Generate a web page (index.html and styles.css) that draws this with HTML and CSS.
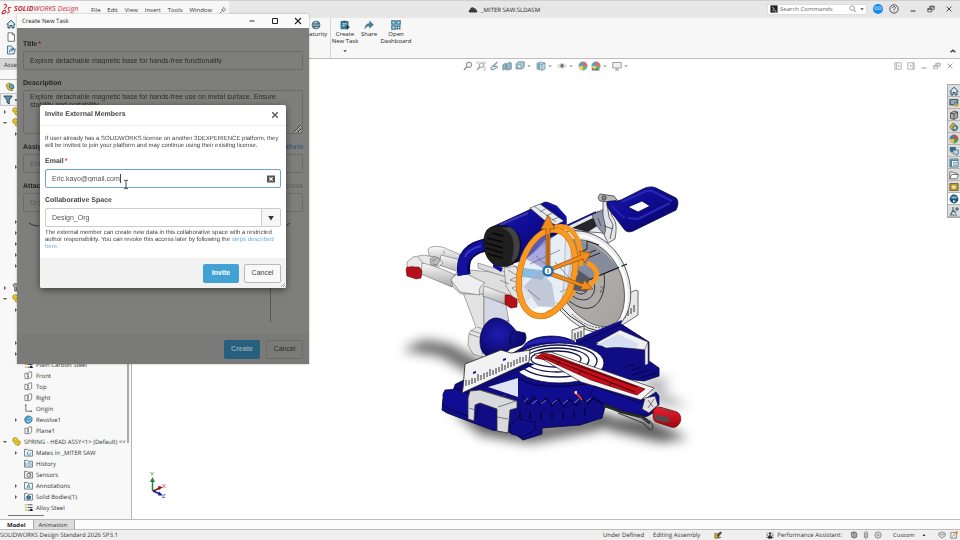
FILE: index.html
```html
<!DOCTYPE html>
<html lang="en">
<head>
<meta charset="utf-8">
<title>SOLIDWORKS Design - _MITER SAW.SLDASM</title>
<link rel="stylesheet" href="styles.css">
</head>
<body>
<svg class="defs" aria-hidden="true">
  <symbol id="i-plane" viewBox="0 0 10 10"><path d="M1 2.500h3v6H1zM4 2.500L5.500 1h3v6L6 8.500H4" fill="none" stroke="#666" stroke-width=".8"/><path d="M5 3v4" stroke="#444" stroke-width=".8" stroke-dasharray="1.500 1"/></symbol>
  <symbol id="i-origin" viewBox="0 0 10 10"><path d="M1 1h2M2 1v7h7M8 7v2" fill="none" stroke="#555" stroke-width=".9"/></symbol>
  <symbol id="i-revolve" viewBox="0 0 10 10"><path d="M1 6c-1-3 2-5 4-5l3 1c2 2 1 6-2 7-3 1-5-1-5-3z" fill="#4a9cc4" stroke="#1f6080" stroke-width=".7"/><path d="M4 6c0-2 2-3 4-3M3 7c2 1 4 0 5-2" fill="none" stroke="#cdeaf6" stroke-width=".9"/></symbol>
  <symbol id="i-part" viewBox="0 0 10 10"><path d="M1 2l2.500-1.500L6 2l.5 2 2.500.8v3L6.500 9.500 3.500 8 3 6 1 5z" fill="#f1cf2b" stroke="#92780e" stroke-width=".8"/><path d="M3 4l3 1.500M6.500 6v2" stroke="#92780e" stroke-width=".6"/></symbol>
  <symbol id="i-folder" viewBox="0 0 10 10"><path d="M.6 1.500h3l1 1h4.800v6.500H.6z" fill="#f2f5f6" stroke="#5f6b72" stroke-width=".9"/></symbol>
  <symbol id="i-mates" viewBox="0 0 10 10"><use href="#i-folder"/><path d="M4 4v3.500c2 1 3 0 3-1V5" fill="none" stroke="#3f8fb5" stroke-width="1"/></symbol>
  <symbol id="i-history" viewBox="0 0 10 10"><use href="#i-folder"/><circle cx="6" cy="6" r="2" fill="#fff" stroke="#2b8ab8" stroke-width=".8"/><path d="M6 5v1h1" fill="none" stroke="#333" stroke-width=".6"/><path d="M2 4v4" stroke="#46a060"/></symbol>
  <symbol id="i-sensors" viewBox="0 0 10 10"><use href="#i-folder"/><circle cx="5.500" cy="5.800" r="2.200" fill="#fff" stroke="#333" stroke-width=".8"/><path d="M5.500 6l1.500-1" stroke="#c22" stroke-width="1"/></symbol>
  <symbol id="i-annot" viewBox="0 0 10 10"><use href="#i-folder"/><path d="M3.200 8L5 3.500 6.800 8M4 6.500h2" fill="none" stroke="#2380a8" stroke-width=".9"/></symbol>
  <symbol id="i-solid" viewBox="0 0 10 10"><use href="#i-folder"/><path d="M3 4.800l2-1 2.200 1v2.400l-2.200 1-2-1z" fill="#2b86ad" stroke="#124" stroke-width=".6"/></symbol>
  <symbol id="i-steel" viewBox="0 0 10 10"><path d="M1 2h2M1 5h2M1 8h2" stroke="#d3a82a" stroke-width="1.300"/><path d="M4 2h5.500M4 5h5.500M4 8h2" stroke="#4a5a62" stroke-width="1.100"/><path d="M6 9l1-2.500h2L10 9z" fill="#222"/></symbol>
  <symbol id="i-caret" viewBox="0 0 6 6"><path d="M1.300 2.200h3.400L3 4.200z" fill="#444"/></symbol>
  <symbol id="i-min" viewBox="0 0 10 10"><path d="M2 7.500h6" stroke="currentColor" stroke-width="1.300"/></symbol>
  <symbol id="i-restore" viewBox="0 0 10 10"><path d="M1 4.500h5v4H1zM3.500 4V1.500h5.500v4H6.500M3.500 2.500H9M1 5.500h5" fill="none" stroke="currentColor" stroke-width=".9"/></symbol>
  <symbol id="i-close" viewBox="0 0 10 10"><path d="M2 2l6 6M8 2L2 8" stroke="currentColor" stroke-width="1.100"/></symbol>
  <symbol id="i-max" viewBox="0 0 10 10"><path d="M2.500 2.500h5v5h-5z" fill="none" stroke="currentColor" stroke-width="1"/></symbol>
  <symbol id="i-home" viewBox="0 0 10 10"><path d="M.8 5.500L5 1.200l4.200 4.300M2 5v4h2V6.500h2V9h2V5" fill="#d8ebf4" stroke="#244d66" stroke-width="1"/></symbol>
  <symbol id="i-ball" viewBox="0 0 10 10"><circle cx="5" cy="5" r="4.300" fill="#e8edf2" stroke="#777" stroke-width=".4"/><path d="M5 5V.7A4.300 4.300 0 0 0 .7 5z" fill="#38a"/><path d="M5 5V.7A4.300 4.300 0 0 1 9.300 5z" fill="#d8453c"/><path d="M5 5h4.300A4.300 4.300 0 0 1 5 9.300z" fill="#48a248"/><path d="M5 5v4.300A4.300 4.300 0 0 1 .7 5z" fill="#e5bd4e"/></symbol>
  <symbol id="i-cube" viewBox="0 0 10 10"><path d="M1 2.500L4 1l5 1v6L6 9.200 1 8z" fill="#b6d9e6" stroke="#456878" stroke-width=".7"/><path d="M1 2.500L6 3.400V9.200M6 3.400L9 2" fill="none" stroke="#456878" stroke-width=".7"/><path d="M1.400 3L4 3.500V8.300L1.400 7.700z" fill="#4d93b0"/></symbol>
</svg>

<div class="app">
  <header class="titlebar">
    <div class="brand">
      <svg class="brand-mark" viewBox="0 0 12 12"><path d="M3 .8c2-.6 4.300.3 2.500 2.400L3.600 5M1 10.500c3 .2 5-1.400 4.200-3C4.700 6.400 3 7 2 8L.8 10.600M11 4.200C9 3.300 7 4.200 8.200 6c1 1.500 2 3-1.700 4" fill="none" stroke="#c92b3b" stroke-width="1.200"/></svg>
      <span class="brand-name"><b>SOLID</b>WORKS <span class="brand-sub">Design</span></span>
    </div>
    <nav class="menu">
      <button>File</button><button>Edit</button><button>View</button><button>Insert</button><button>Tools</button><button>Window</button>
      <svg class="ic8" viewBox="0 0 10 10"><path d="M5 1l4 4M6 2L4 5l1.500 1.500L8.500 4.500M3 4l3.500 3.500M4.500 5.800L1 9" fill="none" stroke="#666" stroke-width=".9"/></svg>
    </nav>
    <div class="doc-title">
      <svg class="cloud" viewBox="0 0 10 7"><path d="M2 6.500C.2 6.400.2 4 2 3.800 2 1.400 5 .3 6.200 2.400c1.500-.3 2 .6 1.900 1.500C9.800 4 9.800 6.400 8.300 6.500z" fill="#3b3b3b"/></svg>
      <span>_MITER SAW.SLDASM</span>
    </div>
    <div class="title-tools">
      <div class="search">
        <svg class="ic8" viewBox="0 0 10 10"><path d="M.5.5h9v9h-9z" fill="#222"/><path d="M3 2.500L5.500 5 3 7.500M5.500 7.500H8" fill="none" stroke="#fff" stroke-width="1"/></svg>
        <input type="text" aria-label="Search Commands" placeholder="Search Commands">
        <svg class="ic8" viewBox="0 0 10 10"><circle cx="4" cy="4" r="2.900" fill="none" stroke="#888"/><path d="M6.200 6.200L9 9" stroke="#888" stroke-width="1.200"/></svg>
        <svg class="ic6"><use href="#i-caret"/></svg>
      </div>
      <span class="avatar">DD</span>
      <div class="window-buttons">
        <button aria-label="Help"><svg class="ic10" viewBox="0 0 10 10"><circle cx="5" cy="5" r="4.200" fill="none" stroke="#444" stroke-width=".9"/><path d="M3.600 4c0-2 3-1.800 2.800-.1C6.300 4.800 5 4.800 5 6M5 6.900v.9" fill="none" stroke="#444" stroke-width=".9"/></svg></button>
        <button aria-label="Minimize"><svg class="ic8"><use href="#i-min"/></svg></button>
        <button aria-label="Restore"><svg class="ic8"><use href="#i-restore"/></svg></button>
        <button aria-label="Close"><svg class="ic8"><use href="#i-close"/></svg></button>
      </div>
    </div>
  </header>

  <section class="ribbon">
    <div class="quick">
      <button aria-label="Home"><svg class="ic10"><use href="#i-home"/></svg></button>
      <button aria-label="New"><svg class="ic10" viewBox="0 0 10 10"><path d="M2 .8h4.500l2 2v6.500H2zM6.500.8v2h2" fill="#fff" stroke="#555" stroke-width=".8"/></svg></button>
      <button aria-label="Open"><svg class="ic10" viewBox="0 0 10 10"><path d="M1.500 1h4l2 2v1h1.800L8 9H1.500z" fill="#d8eaf2" stroke="#35596c" stroke-width=".8"/><path d="M3.500 7c0-2 1-2.500 3-2.500M5.500 3.200L7.500 4.500 5.500 6" fill="none" stroke="#26678a" stroke-width="1"/></svg></button>
    </div>
    <div class="ribbon-gap"></div>
    <div class="commands">
      <button class="cmd cmd-maturity"><svg class="ic10" viewBox="0 0 10 10"><circle cx="5" cy="5" r="4" fill="#9cc4d4" stroke="#486878" stroke-width=".8"/><path d="M1 4h7L6.500 2M9 6.300H2l1.500 2" fill="none" stroke="#395665" stroke-width="1"/></svg><span>Maturity</span></button>
      <button class="cmd cmd-task"><svg class="ic10" viewBox="0 0 10 10"><path d="M1 1.500h7v7.300H1z" fill="#438ba8" stroke="#294c5c" stroke-width=".7"/><path d="M3 .8h3v1.500H3z" fill="#294c5c"/><path d="M2.500 3.800h4M2.500 5.500h2" stroke="#d5ebf3" stroke-width=".8"/><path d="M7.500 5.200v4M5.500 7.200h4" stroke="#113a50" stroke-width="1.300"/></svg><span>Create<br>New Task</span><svg class="ic6 cmd-more"><use href="#i-caret"/></svg></button>
      <button class="cmd cmd-share"><svg class="ic10" viewBox="0 0 10 10"><path d="M.8 8.800C1 5.300 3 3.500 5.600 3.500V1L9.500 4.800 5.600 8.300V6C3.500 6 2 6.500.8 8.800z" fill="#3e81a0" stroke="#295b73" stroke-width=".4"/></svg><span>Share</span></button>
      <button class="cmd cmd-open"><svg class="ic10" viewBox="0 0 10 10"><path d="M.8.8h3.400v3.400H.8zM5.800.8h3.400v3.400H5.800zM.8 5.800h3.400v3.400H.8z" fill="#c9e2ec" stroke="#2f7896" stroke-width="1.200"/><path d="M5.300 5.300h1.900v1.900H5.300zM7.700 5.300h1.800v1.900H7.700zM5.300 7.800h1.900v1.700H5.300zM7.700 7.800h1.800v1.700H7.700z" fill="#34647a"/></svg><span>Open<br>Dashboard</span></button>
    </div>
    <button class="collapse" aria-label="Collapse ribbon"><svg class="ic8" viewBox="0 0 10 10"><path d="M2 6.500L5 4l3 2.500" fill="none" stroke="#333" stroke-width="1.600"/></svg></button>
  </section>

  <main class="work">
    <aside class="side">
      <div class="side-tab">Assembly</div>
      <div class="side-mode"><svg class="ic10" viewBox="0 0 10 10"><path d="M1 3l3-2 3 1.500L9 5 7 9 3 7.500z" fill="#e8c732" stroke="#7c6a17" stroke-width=".7"/><circle cx="6.500" cy="4.500" r="2.300" fill="#5aa9c8" stroke="#285a70" stroke-width=".7"/></svg></div>
      <div class="side-filter"><svg class="ic10" viewBox="0 0 10 10"><path d="M.8 1h8.400L6.200 5v4L4 7.500V5z" fill="#5796b2" stroke="#243f4d" stroke-width=".9"/></svg><svg class="ic6"><use href="#i-caret"/></svg></div>
      <ul class="tree">
        <li class="top shut"><svg><use href="#i-part"/></svg></li>
        <li class="top open"><svg><use href="#i-part"/></svg></li>
        <li class="shut"></li><li></li><li></li><li class="shut"></li><li></li><li></li><li></li><li></li>
        <li class="shut"></li><li class="shut"></li><li class="shut"></li><li class="shut"></li><li class="shut"></li><li></li>
        <li class="top shut"><svg viewBox="0 0 10 10"><path d="M2 1c4-1 6 1 5 3l-2 1v4H3V5C1 4 1 2 2 1z" fill="#aaa" stroke="#444" stroke-width=".8"/></svg></li>
        <li class="top open"><svg><use href="#i-part"/></svg></li>
        <li class="shut"></li><li></li><li></li><li class="shut"></li><li class="shut"></li>
        <li><svg><use href="#i-steel"/></svg>Plain Carbon Steel</li>
        <li><svg><use href="#i-plane"/></svg>Front</li>
        <li><svg><use href="#i-plane"/></svg>Top</li>
        <li><svg><use href="#i-plane"/></svg>Right</li>
        <li><svg><use href="#i-origin"/></svg>Origin</li>
        <li class="shut"><svg><use href="#i-revolve"/></svg>Revolve1</li>
        <li><svg><use href="#i-plane"/></svg>Plane1</li>
        <li class="top open"><svg><use href="#i-part"/></svg>SPRING - HEAD ASSY&lt;1&gt; (Default) &lt;&lt;</li>
        <li class="shut"><svg><use href="#i-mates"/></svg>Mates in _MITER SAW</li>
        <li><svg><use href="#i-history"/></svg>History</li>
        <li><svg><use href="#i-sensors"/></svg>Sensors</li>
        <li class="shut"><svg><use href="#i-annot"/></svg>Annotations</li>
        <li class="shut"><svg><use href="#i-solid"/></svg>Solid Bodies(1)</li>
        <li><svg><use href="#i-steel"/></svg>Alloy Steel</li>
      </ul>
      <div class="hscroll"></div>
      <div class="vscroll"></div>
    </aside>

    <section class="viewport">
      <svg class="scene" viewBox="132 59 828 460" preserveAspectRatio="xMidYMid meet">
        <defs>
          <filter id="soft" x="-40%" y="-60%" width="180%" height="220%"><feGaussianBlur stdDeviation="6"/></filter>
          <linearGradient id="tube" x1="0" y1="0" x2="0" y2="1"><stop offset="0" stop-color="#fafafa"/><stop offset="1" stop-color="#a9a9a9"/></linearGradient>
          <linearGradient id="blueg" x1="0" y1="0" x2="1" y2="1"><stop offset="0" stop-color="#1c1a9c"/><stop offset=".4" stop-color="#100d98"/><stop offset="1" stop-color="#06045a"/></linearGradient>
          <radialGradient id="bulb" cx=".4" cy=".4" r=".6"><stop offset="0" stop-color="#1f1cb0"/><stop offset="1" stop-color="#0a0768"/></radialGradient>
          <linearGradient id="disc" x1="0" y1="0" x2="1" y2="1"><stop offset="0" stop-color="#8d93a0"/><stop offset=".5" stop-color="#b0acaa"/><stop offset="1" stop-color="#a5a19f"/></linearGradient>
          <linearGradient id="grip" x1="0" y1="0" x2="0" y2="1"><stop offset="0" stop-color="#e8202c"/><stop offset="1" stop-color="#9c0812"/></linearGradient>
        </defs>

        <g filter="url(#soft)" fill="#000">
          <path d="M402 350L424 340 450 344 490 366 478 378 440 356z" opacity=".6"/>
          <path d="M450 408L500 418 545 425 610 412 600 430 530 443 480 435z" opacity=".6"/>
          <path d="M590 415L650 420 688 438 660 442 610 430z" opacity=".65"/>
          <path d="M640 375L672 380 660 390 690 408 660 405z" opacity=".3"/>
        </g>

        <!-- slide rails -->
        <g stroke="#555" stroke-width=".5">
          <path d="M428 250c0-4 12-5 19-1l19 8v12l-35-6z" fill="url(#tube)"/>
          <path d="M441 255l24 6v13l-26-9z" fill="url(#tube)"/>
          <path d="M407 262l6-5 11-2 15 3 4 5-8 7-14 5-14-5z" fill="#e8e8e8"/>
          <path d="M430 259l5-3 5 4-3 6-6-1z" fill="#bbb"/>
          <path d="M432 261l4-2M433 264l4 1M444 250v4M418 257l6 7M410 266l14 4" fill="none"/>
          <path d="M422 263c10 2 20 6 34 12l-4 12-31-13z" fill="url(#tube)"/>
          <path d="M407 267l12 0 3 4-1 7-5 1-9-3-1-6z" fill="#b51019" stroke="#500"/>
          <path d="M462 290l22 4v32l-2 31-9-3-5-9 1-12 7-6z" fill="#e3e3e3"/>
          <path d="M484 294l21 6 4 22-25 9z" fill="#d3d8e4"/>
          <path d="M477 327l7 2 25-9M469 334l13 4M470 330l12 4" fill="none"/>
          <path d="M451 280l6-8 14-2 20 2 24 6 6 10-2 14-8 6-26-14-24 0-8-7z" fill="#dedede"/>
          <path d="M451 280c3-5 8-7 14-7l20 10c-5 2-7 8-5 12l-20-3z" fill="#efefef"/>
          <path d="M484 286l25 9-2 10-24-9z" fill="url(#tube)"/>
          <path d="M505 295l5 0 7 4 0 8-6 1-6-4z" fill="#b51019" stroke="#500"/>
          <path d="M478 263l28 9 3 4-6 0-25-8z" fill="#ddd"/>
          <path d="M504 268l12-2 10 6-4 12 8 14-8 4-10-6-6-10z" fill="#e4e4e4"/>
          <path d="M508 270l10 6-8 4 12 4-10 4 8 6M500 280l9 4M512 264l10 8" fill="none" stroke="#444"/>
        </g>
        <path d="M464 275c-3-19 6-28 27-31" fill="none" stroke="#07054c" stroke-width="13"/>
        <path d="M463 275c-3-18 6-27 27-32" fill="none" stroke="#1310a0" stroke-width="10"/>
        <path d="M465 257c2-6 8-9 16-11" fill="none" stroke="#3a37bc" stroke-width="2"/>

        <!-- motor -->
        <path d="M490 228l37-17 18-9 11 5 10 11v9l-22 17-20 16-18 5z" fill="url(#blueg)" stroke="#05033c" stroke-width=".8"/>
        <path d="M500 225l28-12" stroke="#3b38b8" stroke-width="2"/>
        <path d="M530 208l10-4 24 17-8 4-12-5z" fill="#e9ebf2" stroke="#333" stroke-width=".6"/>
        <path d="M534 206l22 16M540 212l7-4M546 216l8-4M552 220l7-3" stroke="#444" stroke-width=".6"/>
        <path d="M546 203l10 4 9 10v8" fill="none" stroke="#1310a0" stroke-width="3"/>
        <path d="M487 230c5-5 15-5 22-3 7 2 11 9 12 16 0 8-3 17-8 21-8 5-18 3-23-3-6-6-9-22-3-31z" fill="#1f1f1f" stroke="#000" stroke-width=".6"/>
        <path d="M501 228c12 2 16 16 10 35l6-5c5-11 3-26-7-31z" fill="#414141"/>
        <path d="M487 238l16 4M486 243l17 5M486 248l17 5M488 254l15 4M492 233l11 3" stroke="#070707" stroke-width="1.400"/>
        <path d="M493 264l10 4-2 4-8-5z" fill="#1310a0"/>

        <!-- arm and loop handle -->
        <path d="M566 227l33-16 6 6-2 16-26-2z" fill="#e4e6ea" stroke="#333" stroke-width=".7"/>
        <path d="M572 228l25-12v10l-9 6z" fill="#25262c"/>
        <path d="M566 226l30-14" stroke="#12107c" stroke-width="1.500"/>
        <path d="M592 215l12-6 4 18-2 10-10-12z" fill="#8f95a6" stroke="#333" stroke-width=".6"/>
        <path d="M603 198l7 0c5 6-1 12 2 18 6 7 4 16 3 23l-7 4-4-8c4-8-1-15-1-21z" fill="#e4e5e8" stroke="#333" stroke-width=".7"/>
        <path d="M607 204l2 13 4 8-3 14M604 226l9 3M598 218l3 8" fill="none" stroke="#333" stroke-width=".7"/>
        <path d="M598 198l2-4 14 2 3 4-6 2-11-1z" fill="#b8babd" stroke="#222" stroke-width=".7"/>
        <circle cx="604" cy="198" r="2.200" fill="#888" stroke="#222" stroke-width=".6"/>
        <path fill-rule="evenodd" d="M607 202c3-2 9 0 14-2l22-11c4-2 9-3 13-1l20 10c3 3 2 8 0 12l-41 20c-5 3-9 2-11-1l-9-12c-4-4-9-11-8-15zM628 207l10 5 12-6-8-5z" fill="url(#blueg)" stroke="#050338" stroke-width=".8"/>
        <path d="M622 202l22-10c4-2 7-2 10 0l18 9M628 218l10 1 32-16" fill="none" stroke="#2926b4" stroke-width="2.200"/>
        <path d="M612 206c4 4 8 9 13 12" fill="none" stroke="#2421a8" stroke-width="2"/>

        <!-- blade and guard -->
        <path d="M622 296l14-6 2 1v24l-22 14-6-6z" fill="#e8e8e8" stroke="#333" stroke-width=".7"/>
        <path d="M625 312v6M628 310v6M631 308v6M634 305v7" stroke="#222" stroke-width=".9"/>
        <path d="M566 232c20-5 43 6 56 29 14 26 11 56-8 68-16 9-37 0-54-19 6-22 4-54 6-78z" fill="#e9eaec" stroke="#333" stroke-width=".8"/>
        <path d="M572 240c22-3 41 13 49 35 7 22 3 43-8 50-14 6-33-5-46-22z" fill="url(#disc)" stroke="#333" stroke-width=".7"/>
        <path d="M573 241c21 1 36 14 45 28l-52 19z" fill="#868c9b"/>
        <path d="M560 292l67-28" stroke="#111" stroke-width="1.300"/>
        <path d="M566 262l30-12M570 265l30-12M577 254l10-5v-8l12 4" fill="none" stroke="#222" stroke-width="1"/>
        <path d="M573 235c22 0 41 14 50 38 5 15 5 33-1 44" fill="none" stroke="#fff" stroke-width="2.500"/>
        <path d="M604 274c2 14-2 28-11 33-9 4-19-1-27-9M594 281c2 8 0 15-6 18-8 3-15-2-20-7M588 284c1 6-2 9-6 10-5 0-8-3-11-7" fill="none" stroke="#333" stroke-width="1"/>
        <path d="M572 314c14 14 32 18 42 9" fill="none" stroke="#555" stroke-width=".9" stroke-dasharray="2 1"/>
        <path d="M556 302l14 14 18 12 14 4" fill="none" stroke="#333" stroke-width="1"/>
        <path d="M600 287h4l-4 5h4" fill="none" stroke="#444" stroke-width=".6"/>
        <path d="M578 270l12 8-4 14-14-2z" fill="#555b66"/>

        <!-- base -->
        <path d="M576 339l46-19h0l-2 8-44 22z" fill="#11108a"/>
        <path d="M523 347c8-14 44-14 54-3l44-20 28 18v19l10 7v8l-15 5-28-3-6 5 42 20 4 8-8 5-5 1-38-10-3 11-22 7-38 3v6l-19 6-9-7-22-3-45-17-5-3 1-11 13-5 5-10z" fill="#0f0c84" stroke="#050338" stroke-width=".8"/>
        <path d="M572 330l12-4v11l-12 4z" fill="#e8e8e8" stroke="#222" stroke-width=".7"/>
        <path d="M575 333v6M578 332v6M581 331v6" stroke="#222"/>
        <path d="M596 343l24-13 28 12-2 8-26-3-14 1z" fill="#f1f1f1" stroke="#333" stroke-width=".6"/>
        <path d="M596 345l22-11 21 10-3 4-20-1z" fill="#d6def2"/>
        <path d="M645 348l3-5v21l-3 1z" fill="#eee" stroke="#555" stroke-width=".6"/>
        <path d="M626 367l8-3M630 371l11-4M632 375l17-5M640 378l16-5M608 378l18 4" stroke="#05033e" stroke-width="1"/>
        <path d="M523 347c9-12 45-13 54-2-14-4-39-4-54 2z" fill="#2421b0"/>
        <ellipse cx="559" cy="363" rx="45" ry="20" fill="#fff" stroke="#050338" stroke-width=".8"/>
        <g fill="none" stroke="#12124c" stroke-width="1.300">
          <ellipse cx="558" cy="361" rx="39" ry="16"/><ellipse cx="557" cy="360" rx="32" ry="12"/><ellipse cx="556" cy="359" rx="25" ry="8"/>
        </g>
        <path d="M512 371c10 14 42 18 80 12l14 7-12 12-55 5-25-10z" fill="#100d90"/>
        <path d="M516 377c14 11 50 12 78 5" fill="none" stroke="#050338"/>
        <path d="M534 354l17-2 103 36-13 12-60-18z" fill="#f5f5f5" stroke="#222" stroke-width=".7"/>
        <path d="M594 386l45 17 17-11 3 4 0 9-14 10-16-2-40-15z" fill="#100d92" stroke="#050338" stroke-width=".7"/>
        <path d="M535 358l8-5 10 2 92 34-8 6-46-15-44-20z" fill="#c80d1b" stroke="#500" stroke-width=".7"/>
        <path d="M543 356l92 36M551 356l86 31" stroke="#4f0007" stroke-width="1.300"/>
        <path d="M582 370l-3 4M612 382l-3 4M560 361l-3 4" stroke="#300" stroke-width="1"/>
        <path d="M522 396l6 8 6-7 6 8 6-7 6 8 6-7 6 8 6-8 6 7 6-8 6 6 6-7 8 7" fill="none" stroke="#05033a" stroke-width="1.200"/>
        <path d="M524 402l4-4M532 404l5-4M541 404l5-4M552 404l5-4M563 404l5-4M574 403l5-4M586 402l5-4" stroke="#8f96b8" stroke-width=".8"/>
        <path d="M520 411v9M530 412v7M541 412v8M552 412v7M563 411v8M574 410v8M585 409v7" stroke="#070548" stroke-width="1.600"/>
        <path d="M574 392l4 3 4 5" stroke="#d42" stroke-width="1.800" fill="none"/>
        <path d="M575 391h2v3h-2z" fill="#ddd"/>

        <!-- column bulb -->
        <path d="M480 342c0-14 8-24 16-24 8 0 16 7 20 13l9 2c2 4 1 10-3 12l-12 4-8 8c-12 4-22-2-22-15z" fill="url(#bulb)" stroke="#05033c" stroke-width=".7"/>
        <path d="M514 331c-4 4-5 10-3 14" fill="none" stroke="#05033c"/>

        <!-- left fence and clamp -->
        <path d="M455 384l12-6 58-16 10 2-48 24-20 10-15-6z" fill="#0e0b74"/>
        <path d="M443 394l2-4 12-1 23 9-4 20-6-1-27-11z" fill="#100d92" stroke="#050338" stroke-width=".7"/>
        <path d="M488 387l30-9v19z" fill="#dfe4f4"/>
        <path d="M465 364l36-14 10 3 19-3-1 12-67 31 1-5z" fill="#f2f2f2" stroke="#222" stroke-width=".8"/>
        <path d="M466 386v-6M469 385v-5M472 384v-6M475 383v-5M478 381v-7M481 380v-5M484 379v-6M487 377v-5M490 376v-7M493 375v-5M496 374v-6M499 372v-5M502 371v-7M505 370v-5M508 368v-6M511 367v-5M514 366v-6M517 364v-5M520 363v-6M523 362v-5M526 361v-6" stroke="#1c1c1c" stroke-width=".9"/>
        <path d="M473 372l3-1v2l-3 1zM503 359l3-1v2l-3 1z" fill="#12107a"/>
        <path d="M468 398l2-7 10-1 37 11v7l-7 2-2 23-11-2v-22l-17-6-5 2-1 16-6-2z" fill="#d9dadd" stroke="#333" stroke-width=".8"/>
        <path d="M480 390l36 11-18 6M497 417l11 2M469 408l6 2M500 397l6-2" fill="none" stroke="#555" stroke-width=".7"/>
        <path d="M510 425l8-6 17 3v8l-12 7-12-3z" fill="#100d88" stroke="#050338" stroke-width=".7"/>

        <!-- front lever and grip -->
        <path d="M604 405l18 7 20 5 8 6" fill="none" stroke="#272727" stroke-width="3"/>
        <path d="M640 417l11 6c3 2 2 7-1 7l-7-7-25-10" fill="none" stroke="#444" stroke-width="1.200"/>
        <path d="M645 398l10-2 3 9-9 8-7-4z" fill="#e2e2e2" stroke="#222" stroke-width=".7"/>
        <path d="M648 400l5 7M654 399l-6 9" stroke="#444" stroke-width=".7"/>
        <path d="M653 413c0-4 3-6 7-6l17 5c4 2 5 8 2 12-2 3-5 4-8 3l-15-5c-3-2-3-5-3-9z" fill="url(#grip)" stroke="#600" stroke-width=".7"/>
        <path d="M655 415l13 3c2 2 1 4-1 4l-11-3zM662 408l10 4" fill="#4c4c4c" stroke="#555" stroke-width="1"/>

        <!-- move triad -->
        <path d="M519 268l26-28 18-8 12 14 3 28-20 30-32 6-7-14z" fill="#dde7f4" opacity=".7"/>
        <path d="M548 271l-32-4 2 9 24 4z" fill="#74b0de" opacity=".8"/>
        <path d="M548 271l-24-13c4-14 14-23 24-24z" fill="#8584cf" opacity=".65"/>
        <path d="M524 286l16-16 12 14 4 24-18-2z" fill="#a9b0c6" opacity=".6"/>
        <path d="M530 264l30-14M536 256l9 8M528 290l12 10M555 262l18 20" stroke="#555" stroke-width=".6"/>
        <path d="M554 228c12-5 21 3 25 16 2 8 1 16 2 22M583 286c8 0 13-5 14-12-1-6-5-9-10-11M574 290c-8 13-16 19-27 24" fill="none" stroke="#f9961e" stroke-width="5"/>
        <ellipse cx="547" cy="273" rx="27" ry="44" transform="rotate(14 547 273)" fill="none" stroke="#c66e0a" stroke-width="6"/>
        <ellipse cx="547" cy="273" rx="27" ry="44" transform="rotate(14 547 273)" fill="none" stroke="#fb9a22" stroke-width="5"/>
        <g stroke="#8d4e10" stroke-width=".7" fill="#f08c1c">
          <path d="M546 270v-41h-5l7-14 7 14h-5v41z"/>
          <path d="M547 269l34-14-2-4 12 2-6 10-2-4-35 13z"/>
          <path d="M549 271l34 13 1-4 9 9-13 1 2-3-34-12z"/>
        </g>
        <path d="M548 266v-32" stroke="#9a5a2a" stroke-width="1.500"/>
        <circle cx="548" cy="271" r="4.500" fill="#fff" stroke="#1d6db0" stroke-width="2.400"/>
        <path d="M548 269v4" stroke="#2478ba" stroke-width="1.200"/>

        <!-- view triad -->
        <g fill="none">
          <path d="M152.500 491v-10" stroke="#2d7d3c" stroke-width="1.500"/><path d="M150 482l2.500-5 2.500 5z" fill="#2d7d3c"/>
          <path d="M153 491l7-3" stroke="#851426" stroke-width="1.700"/><path d="M158 486l5 1-4 3z" fill="#851426"/>
          <path d="M153 491l7 3" stroke="#1a1a9c" stroke-width="1.700"/><path d="M159 491.500l4 4-5 0z" fill="#1a1a9c"/>
        </g>
        <text x="150" y="476" class="axis axis-y">Y</text>
        <text x="162" y="488" class="axis axis-x">X</text>
        <text x="162" y="498" class="axis axis-z">Z</text>
      </svg>

      <div class="hud">
        <div class="hud-tools">
          <svg class="ic10" viewBox="0 0 10 10"><circle cx="6" cy="3.800" r="2.700" fill="#eee" stroke="#666" stroke-width="1"/><path d="M4 5.800L1 9" stroke="#666" stroke-width="1.300"/></svg>
          <svg class="ic10" viewBox="0 0 10 10"><path d="M1 3V1h2M7 1h2v2M9 6v3H7" fill="none" stroke="#999" stroke-width=".8"/><circle cx="5.500" cy="4.200" r="2.400" fill="#edf4f7" stroke="#777" stroke-width=".9"/><path d="M3.800 6L1 9" stroke="#777" stroke-width="1.200"/></svg>
          <svg class="ic10" viewBox="0 0 10 10"><path d="M8.500 1L3 6c-2 1-1 3 1 2.500L7 7M4 5c3 0 5 0 4 2.500" fill="none" stroke="#6a8591" stroke-width="1.300"/></svg>
          <svg class="ic10" viewBox="0 0 10 10"><path d="M.8 4l3-2v6l-3 1zM4.500 3L8 1l1.300 1v6L6 9H4.500z" fill="#79a9bb" stroke="#4d6b78" stroke-width=".8"/></svg>
          <svg class="ic10" viewBox="0 0 10 10"><path d="M3 .8h6.300v5L7.500 8H1V3z" fill="#93bccb" stroke="#54727e" stroke-width=".8"/><path d="M2.500 4h3.500v2.800H2.500z" fill="#fff" stroke="#3c7590" stroke-width=".7"/></svg><svg class="ic6"><use href="#i-caret"/></svg>
          <svg class="ic10"><use href="#i-cube"/></svg><svg class="ic6"><use href="#i-caret"/></svg>
          <svg class="ic10" viewBox="0 0 10 10"><path d="M.8 5C3 2 7 2 9.200 5 7 7.500 3 7.500.8 5z" fill="#eee" stroke="#999" stroke-width=".7"/><circle cx="5" cy="4.800" r="1.700" fill="#444"/></svg><svg class="ic6"><use href="#i-caret"/></svg>
          <svg class="ic10"><use href="#i-ball"/></svg>
          <svg class="ic10" viewBox="0 0 10 10"><use href="#i-ball"/><path d="M.8 9.500V6.500l3 2 2-2 3.500 3z" fill="#465c50"/></svg><svg class="ic6"><use href="#i-caret"/></svg>
          <svg class="ic10" viewBox="0 0 10 10"><path d="M.8 1.500h8.400v5.500H.8zM5 7v2M3 9h4" fill="#e9eff2" stroke="#777" stroke-width=".9"/></svg><svg class="ic6"><use href="#i-caret"/></svg>
        </div>
        <div class="doc-tools">
          <button aria-label="Previous pane"><svg class="ic8" viewBox="0 0 10 10"><path d="M1 1h8v8H1zM3 1v8" fill="none" stroke="currentColor" stroke-width=".9"/><path d="M6.500 3.500v3L4.500 5z" fill="currentColor"/></svg></button>
          <button aria-label="Next pane"><svg class="ic8" viewBox="0 0 10 10"><path d="M1 1h8v8H1zM7.500 1v8" fill="none" stroke="currentColor" stroke-width=".9"/><path d="M4 3.500v3L6 5z" fill="currentColor"/></svg></button>
          <button aria-label="Minimize document"><svg class="ic8"><use href="#i-min"/></svg></button>
          <button aria-label="Restore document"><svg class="ic8"><use href="#i-restore"/></svg></button>
          <button aria-label="Close document"><svg class="ic8"><use href="#i-close"/></svg></button>
        </div>
      </div>

      <aside class="taskpane">
        <button aria-label="Home"><svg class="ic10"><use href="#i-home"/></svg></button>
        <button aria-label="Resources"><svg class="ic10" viewBox="0 0 10 10"><path d="M.8 1.500h8v5.500h-8z" fill="#5a8ba3" stroke="#444" stroke-width=".8"/><path d="M2 3h5M2 5h3" stroke="#d9e8ee" stroke-width=".8"/><path d="M5 6l3-1 1.500 3L6 9z" fill="#c9a341"/></svg></button>
        <button aria-label="Design Library"><svg class="ic10" viewBox="0 0 10 10"><path d="M1.500 3l4-2 3 1v5.500l-3.500 2-3.500-1z" fill="#aaa" stroke="#444" stroke-width=".8"/><path d="M1.500 3l3.500 1 3.500-2M5 4v5" fill="none" stroke="#444" stroke-width=".8"/></svg></button>
        <button aria-label="Toolbox"><svg class="ic10" viewBox="0 0 10 10"><path d="M1 5l3-4 3 2 2 3-3 3-3-1z" fill="#e2bf33" stroke="#554a15" stroke-width=".7"/><path d="M4 4h4v4H4z" fill="#9fcbe0" stroke="#27536b" stroke-width=".8"/></svg></button>
        <button aria-label="Appearances"><svg class="ic10"><use href="#i-ball"/></svg></button>
        <button aria-label="Forum"><svg class="ic10" viewBox="0 0 10 10"><path d="M.8 1h6v4.500H4L2 7V5.500H.8z" fill="#356b8c"/><path d="M4 4h5.300v4H8v1.500L6 8H4z" fill="#b8d4e2" stroke="#285069" stroke-width=".6"/></svg></button>
        <button aria-label="Properties"><svg class="ic10" viewBox="0 0 10 10"><path d="M1 1h8v8H1z" fill="#f7fafb" stroke="#456c82" stroke-width=".9"/><path d="M1 1.500h8v1.500H1zM1 3h2v6H1z" fill="#4c88a8"/><path d="M4 4.500h4M4 6h4M4 7.500h4" stroke="#6796ad" stroke-width=".8"/></svg></button>
        <button aria-label="Files"><svg class="ic10" viewBox="0 0 10 10"><path d="M.8 8.800V2h3l1 1h3v1.500h1.700L8 8.800z" fill="#fff" stroke="#555" stroke-width=".8"/><path d="M.8 8.800l1.700-4.300h5.500" fill="none" stroke="#555" stroke-width=".8"/></svg></button>
        <button aria-label="Pictures"><svg class="ic10" viewBox="0 0 10 10"><path d="M.8 1.500h8.400v7H.8z" fill="#b9953a" stroke="#5a4a20" stroke-width=".7"/><path d="M2.500 4l2-1 3 1.500L6 7 3 6.500z" fill="#f3df93"/></svg></button>
        <button class="on" aria-label="3DEXPERIENCE"><svg class="ic10" viewBox="0 0 10 10"><circle cx="5" cy="5" r="4.400" fill="#1d5379"/><path d="M1.500 4C3 1.500 7 1.500 8.500 4 6 5 4 5 1.500 4z" fill="#7db8dc"/><path d="M4 6l3 1-3 1.500z" fill="#d8edf7"/></svg></button>
        <button aria-label="Add-ins"><svg class="ic10" viewBox="0 0 10 10"><path d="M4 1v3L1.500 9h5.500M4 4l3 3M1 9h7" fill="none" stroke="#4e6975" stroke-width="1.200"/><path d="M8 1v4M6 3h4" stroke="#27536b" stroke-width="1"/></svg></button>
      </aside>
    </section>
  </main>

  <nav class="doctabs"><button class="active">Model</button><button>Animation</button></nav>

  <footer class="status">
    <span class="edition">SOLIDWORKS Design Standard 2026 SP3.1</span>
    <span>Under Defined</span>
    <span>Editing Assembly</span>
    <svg class="ic8 st-edit" viewBox="0 0 10 10"><path d="M1 3h5v6H1z" fill="#d8ad23" stroke="#554" stroke-width=".7"/><path d="M4 6l4-5 1.500 1.500L5 7zM5 8h4" fill="#555" stroke="#222" stroke-width=".8"/></svg>
    <span class="perf"><svg class="ic8" viewBox="0 0 10 10"><circle cx="5" cy="3" r="1.500" fill="#333"/><path d="M2.500 9c0-5 5-5 5 0zM.5 5h2M7.500 5h2M1 2l1 1M9 2L8 3M.5 8h1.500M8 8h1.500" fill="#333" stroke="#333" stroke-width="1"/></svg>Performance Assistant:</span>
    <span class="perf-icons">
      <svg class="ic8" viewBox="0 0 10 10"><path d="M1.500 2l4-1 3 1.500v5L5 9 2 7.500z" fill="#888" stroke="#555" stroke-width=".7"/><path d="M3 3v4M5 3v5M7 3v4" stroke="#ddd" stroke-width=".6"/></svg>
      <svg class="ic8" viewBox="0 0 10 10"><path d="M3 2c0-1.500 4-1.500 4 0v6c0 1.500-4 1.500-4 0zM3 4h4M3 6.500h4" fill="#ddd" stroke="#777" stroke-width=".9"/></svg>
      <svg class="ic8" viewBox="0 0 10 10"><circle cx="5" cy="5" r="4" fill="#ddd" stroke="#777" stroke-width=".9"/><path d="M3 5h4M5 3v4" stroke="#888" stroke-width=".9"/></svg>
    </span>
    <select aria-label="Unit system"><option>Custom</option></select>
    <svg class="ic6 st-up" viewBox="0 0 6 6"><path d="M1.500 4h3L3 2z" fill="#333"/></svg>
    <span class="st-end">
      <svg class="ic8" viewBox="0 0 10 10"><path d="M1 3l4-2 4 2v3L5 9 1 6z" fill="#ddd" stroke="#777" stroke-width=".9"/><path d="M1 3l4 2 4-2" fill="none" stroke="#777" stroke-width=".8"/></svg>
      <svg class="ic8" viewBox="0 0 10 10"><path d="M1 2h7v7H1zM3 7l3-3" fill="#eee" stroke="#666" stroke-width=".9"/><circle cx="8" cy="2" r="1.900" fill="#f08a1d"/></svg>
    </span>
  </footer>
</div>

<section class="task-window" role="dialog" aria-label="Create New Task">
  <header class="task-head">
    <h1>Create New Task</h1>
    <button aria-label="Minimize"><svg class="ic10" viewBox="0 0 10 10"><path d="M2.500 5h5" stroke="#333" stroke-width="1"/></svg></button>
    <button aria-label="Maximize"><svg class="ic10"><use href="#i-max"/></svg></button>
    <button aria-label="Close"><svg class="ic10"><use href="#i-close"/></svg></button>
  </header>
  <form class="task-form">
    <div class="field"><div class="row"><label for="t-title">Title<i>*</i></label></div>
      <input id="t-title" type="text" value="Explore detachable magnetic base for hands-free functionality"></div>
    <div class="field"><div class="row"><label for="t-desc">Description</label></div>
      <textarea id="t-desc">Explore detachable magnetic base for hands-free use on metal surface. Ensure stability and portability.</textarea></div>
    <div class="field"><div class="row"><label for="t-assign">Assignees</label><a href="#">Invite to platform</a></div>
      <input id="t-assign" type="text" placeholder="Enter a name"></div>
    <div class="field"><div class="row"><label for="t-att">Attachments</label><span>Set access</span></div>
      <input id="t-att" type="text" placeholder="Drop content here">
      <svg class="arc" viewBox="0 0 280 110" preserveAspectRatio="none"><path d="M6 11c3 2 6 3 10 3M259 14c3 0 6-1 8-3" fill="none" stroke="#333" stroke-width="1"/><path d="M247.500 40v72" stroke="#555" stroke-width="1"/></svg>
    </div>
  </form>
  <footer class="task-foot"><button class="primary">Create</button><button class="plain">Cancel</button></footer>
</section>

<section class="invite" role="dialog" aria-label="Invite External Members">
  <header class="invite-head"><h2>Invite External Members</h2><button aria-label="Close"><svg class="ic10" viewBox="0 0 10 10"><path d="M2.200 2.200l5.600 5.600M7.800 2.200L2.200 7.800" stroke="#555" stroke-width="1.300"/></svg></button></header>
  <div class="invite-body">
    <p>If user already has a SOLIDWORKS license on another 3DEXPERIENCE platform, they will be invited to join your platform and may continue using their exisitng license.</p>
    <label for="email">Email<i>*</i></label>
    <div class="box focus">
      <input id="email" type="text" value="Eric.kayo@gmail.com">
      <span class="text-caret"></span>
      <button aria-label="Clear"><svg class="ic10" viewBox="0 0 10 10"><path d="M1 1.500h8v7H1z" fill="#555"/><path d="M3.300 3.300l3.400 3.400M6.700 3.300L3.300 6.700" stroke="#fff" stroke-width="1.200"/></svg></button>
    </div>
    <label for="space">Collaborative Space</label>
    <div class="box">
      <select id="space"><option>Design_Org</option></select>
      <span class="drop"><svg class="ic8" viewBox="0 0 10 10"><path d="M1.500 2.500h7L5 8z" fill="#333"/></svg></span>
    </div>
    <p class="note">The external member can create new data in this collaborative space with a restricted author responsibility. You can revoke this access later by following the <a href="#">steps described here.</a></p>
  </div>
  <footer class="invite-foot"><button class="primary">Invite</button><button class="plain">Cancel</button>
    <svg class="grab" viewBox="0 0 4 4"><path d="M4 0L0 4M4 2L2 4" stroke="#888" stroke-width=".7"/></svg></footer>
  <svg class="ibeam" viewBox="0 0 6 10"><path d="M1 .8h1.500L3 1.300 3.500.8H5M3 1v8M1 9.200h1.500L3 8.700l.5.500H5" fill="none" stroke="#333" stroke-width=".9"/></svg>
</section>
</body>
</html>
```
FILE: styles.css
```css
* { box-sizing: border-box; }

html, body { height: 100%; }

body {
  margin: 0;
  overflow: hidden;
  position: relative;
  background: #fff;
  color: #333;
  font: 7px/8px "Open Sans", "Noto Sans", sans-serif;
  text-rendering: geometricPrecision;
}

button, input, select, textarea {
  margin: 0;
  padding: 0;
  border: 0;
  background: none;
  color: inherit;
  font: inherit;
  border-radius: 0;
  outline: 0;
}

select { appearance: none; }
svg { display: block; flex: none; }
a { color: inherit; text-decoration: none; }
i { font-style: normal; }
.defs { position: absolute; width: 0; height: 0; }
.ic6 { width: 6px; height: 6px; }
.ic8 { width: 8px; height: 8px; }
.ic10 { width: 10px; height: 10px; }

.app { height: 100%; display: flex; flex-direction: column; }

/* title bar */
.titlebar {
  flex: none;
  display: flex;
  height: 18px;
  background: #e6e7e6;
  border-top: 1px solid #cfcfcf;
}
.brand, .menu { display: flex; align-items: center; background: #f6f7f6; }
.brand { gap: 2px; width: 87px; padding-left: 1px; color: #c92b3b; }
.brand-mark { width: 11px; height: 11px; }
.brand-name { font-size: 7px; font-style: italic; white-space: nowrap; }
.brand-sub { font-weight: 400; }
.menu { justify-content: space-between; padding: 0 2px 0 4px; width: 142px; font-size: 6px; }
.doc-title { flex: 1; display: flex; align-items: center; justify-content: center; gap: 3px; padding-left: 12px; font-size: 6px; color: #222; }
.cloud { width: 10px; height: 7px; }
.title-tools { display: flex; align-items: center; gap: 6px; padding: 0 7px 1px 0; color: #333; }
.window-buttons { display: flex; align-items: center; gap: 10px; }
.search { display: flex; align-items: center; gap: 2px; width: 100px; height: 11px; padding: 0 1px 0 2px; background: #fff; border: 1px solid #ddd; }
.search input { flex: 1; min-width: 0; font-size: 6px; }
.search input::placeholder { color: #666; opacity: 1; }
.avatar { display: grid; place-items: center; width: 10px; height: 10px; border-radius: 50%; background: #178be8; color: #fff; font-size: 5px; line-height: 6px; }

/* ribbon */
.ribbon { flex: none; display: flex; height: 41px; background: #f6f7f6; border-bottom: 1px solid #bcbdbc; }
.quick { display: flex; flex-direction: column; gap: 3px; padding: 1px 0 0 6px; width: 17px; }
.ribbon-gap { width: 284px; }
.commands { display: flex; flex: 1; }
.cmd { display: flex; flex-direction: column; align-items: center; gap: 1px; padding-top: 2px; font-size: 6px; line-height: 7px; text-align: center; color: #222; }
.cmd-maturity { width: 30px; border-right: 1px solid #d5d6d5; }
.cmd-task { width: 28px; }
.cmd-share { width: 20px; }
.cmd-open { width: 34px; }
.cmd-more { margin-top: 2px; }
.collapse { align-self: flex-end; padding: 0 3px 3px 0; }

/* feature tree */
.work { flex: 1; display: flex; min-height: 0; }
.side { position: relative; display: flex; flex-direction: column; width: 132px; background: #f7f8f7; border-right: 1px solid #b5b6b5; overflow: hidden; }
.side-tab { flex: none; height: 11px; padding: 2px 0 0 4px; background: #d3d4d3; font-size: 6px; }
.side-mode { flex: none; height: 14px; margin-top: 9px; padding: 2px 0 0 5px; border-top: 1px solid #bbb; }
.side-filter { flex: none; display: flex; align-items: center; height: 13px; padding-left: 2px; background: #eef0f1; border: 1px solid #c7cacc; }
.tree { flex: 1; min-height: 0; margin: 0; padding: 0; overflow: hidden; list-style: none; color: #333; font-size: 6px; white-space: nowrap; }
.tree li { display: flex; align-items: center; gap: 3px; height: 11px; padding-left: 24px; position: relative; }
.tree li svg { width: 9px; height: 9px; }
.tree .top { padding-left: 12px; }
.tree .shut::before, .tree .open::before { content: ""; position: absolute; left: 15px; top: 4px; border: 2px solid transparent; border-left: 2px solid #555; border-right: 0; }
.tree .top::before { left: 4px; }
.tree .open::before { left: 3px; top: 5px; border: 2px solid transparent; border-top: 2px solid #555; border-bottom: 0; }
.hscroll { flex: none; width: 36px; height: 1px; margin: 2px 0 3px 8px; background: #777; }
.vscroll { position: absolute; right: 2px; top: 52px; width: 2px; height: 332px; background: #aaa; }

/* graphics area */
.viewport { position: relative; flex: 1; min-width: 0; background: #fefffe; }
.scene { position: absolute; inset: 0; width: 100%; height: 100%; }
.axis { font: 6px "Liberation Sans", sans-serif; }
.axis-x { fill: #c33; }
.axis-y { fill: #2d8d3c; }
.axis-z { fill: #22c; }
.hud { position: relative; display: grid; grid-template-columns: 1fr auto 1fr; align-items: center; height: 14px; }
.hud-tools { grid-column: 2; display: flex; align-items: center; gap: 3px; opacity: .8; }
.hud-tools .ic6 { margin: 0 1px 0 -2px; opacity: .7; }
.doc-tools { display: flex; justify-content: flex-end; gap: 5px; padding-right: 6px; color: #999; }
.taskpane { position: absolute; right: 0; top: 25px; width: 13px; border: 1px solid #aaa; border-right: 0; background: #dcdcdc; }
.taskpane button { display: grid; place-items: center; width: 100%; height: 12px; border-bottom: 1px solid #b5b5b5; }
.taskpane .on { background: #fff; }

/* document tabs and status */
.doctabs { flex: none; display: flex; height: 10px; background: #fbfcfb; border-top: 1px solid #bbb; padding-left: 2px; }
.doctabs button { padding: 0 7px 0 5px; background: #dcdddc; border-right: 1px solid #aaa; font-size: 6px; }
.doctabs .active { background: #fff; font-weight: 700; color: #222; }
.status { flex: none; display: flex; align-items: center; height: 11px; padding: 0 2px 1px 0; background: #eeefee; border-top: 1px solid #bbb; font-size: 6px; white-space: nowrap; }
.status > span { margin-right: 9px; }
.status .edition { flex: 1; margin: 0; }
.status .st-edit { margin: 0 44px 0 5px; }
.status .perf, .perf-icons, .st-end { display: flex; align-items: center; gap: 3px; }
.status .perf { margin-right: 8px; }
.status .perf-icons { gap: 4px; margin-right: 11px; }
.status .st-up { margin: 0 11px 0 6px; }
.status .st-end { gap: 4px; margin: 0; }

/* shared form pieces */
.task-window, .invite { position: absolute; font-family: "Liberation Sans", sans-serif; display: flex; flex-direction: column; }
.task-window input, .task-window textarea { display: block; width: 100%; height: 19px; padding: 0 6px; border: 1px solid #6b6c6a; border-radius: 2px; font-size: 7px; color: #2b2b2b; }
.primary, .plain { height: 19px; border-radius: 2px; font-size: 7px; text-align: center; }
.primary { width: 36px; font-weight: 700; }
.plain { width: 37px; border: 1px solid #b9b9b9; }

/* task window, dimmed by the open dialog */
.task-window { left: 17px; top: 14px; width: 292px; height: 350px; background: #7e7f7d; box-shadow: 0 0 2px rgba(0, 0, 0, .3); }
.task-head { flex: none; display: flex; align-items: center; gap: 13px; height: 14px; padding: 0 6px 0 5px; background: #f9faf9; color: #222; }
.task-head h1 { flex: 1; margin: 0; font: 6px/8px "Open Sans", sans-serif; }
.task-form { flex: 1; min-height: 0; padding: 12px 6px 0; overflow: hidden; }
.field { margin-bottom: 9px; }
.row { display: flex; justify-content: space-between; height: 11px; line-height: 9px; }
.row label { font-weight: 700; color: #222; }
.row i { color: #7c2020; padding-left: 1px; }
.row a { color: #2f4778; }
.row span { color: #555; }
.task-window textarea { height: 44px; padding: 2px 6px; line-height: 8px; resize: vertical; }
.task-window input::placeholder { color: #5c5d5b; opacity: 1; }
.arc { width: 100%; height: 110px; }
.task-foot { flex: none; display: flex; align-items: center; justify-content: flex-end; gap: 6px; height: 30px; padding-right: 6px; background: #7a7b79; }
.task-foot .primary { background: #27607f; color: #8fa6b2; }
.task-foot .plain { border-color: #6b6c6a; color: #2b2b2b; }

/* invite dialog */
.invite { left: 40px; top: 105px; width: 246px; background: #fff; border-radius: 2px; box-shadow: 0 2px 7px rgba(0, 0, 0, .5); color: #444; }
.invite-head { display: flex; align-items: center; justify-content: space-between; height: 21px; padding: 0 6px 0 5px; border-bottom: 1px solid #eee; }
.invite-head h2 { margin: 0; font-size: 7px; line-height: 8px; }
.invite-body { padding: 10px 5px 7px; }
.invite p { margin: 0 0 8px; font-size: 6px; line-height: 7px; }
.invite label { display: block; height: 11px; font-weight: 700; line-height: 8px; }
.invite label i { color: #d33; padding-left: 1px; }
.box { position: relative; display: flex; align-items: center; height: 19px; margin-bottom: 9px; border: 1px solid #ccc; border-radius: 2px; }
.box input, .box select { flex: 1; min-width: 0; height: 100%; padding-left: 6px; color: #555; }
.box button { margin-right: 4px; }
.focus { border-color: #6fa4cf; }
.text-caret { position: absolute; left: 74px; top: 4px; width: 1px; height: 9px; background: #444; }
.drop { display: grid; place-items: center; width: 19px; height: 100%; border-left: 1px solid #ccc; background: #f5f6f5; }
.invite .note { margin: -6px 0 0; }
.note a { color: #62aee6; }
.invite-foot { position: relative; display: flex; align-items: center; justify-content: flex-end; gap: 5px; height: 30px; padding-right: 5px; background: #f1f2f1; border-radius: 0 0 2px 2px; }
.invite-foot .primary { background: #42a2d5; color: #fff; }
.invite-foot .plain { background: #f8f9f8; }
.grab { position: absolute; right: 1px; bottom: 1px; width: 4px; height: 4px; }
.ibeam { position: absolute; left: 83px; top: 74px; width: 6px; height: 11px; }
```
